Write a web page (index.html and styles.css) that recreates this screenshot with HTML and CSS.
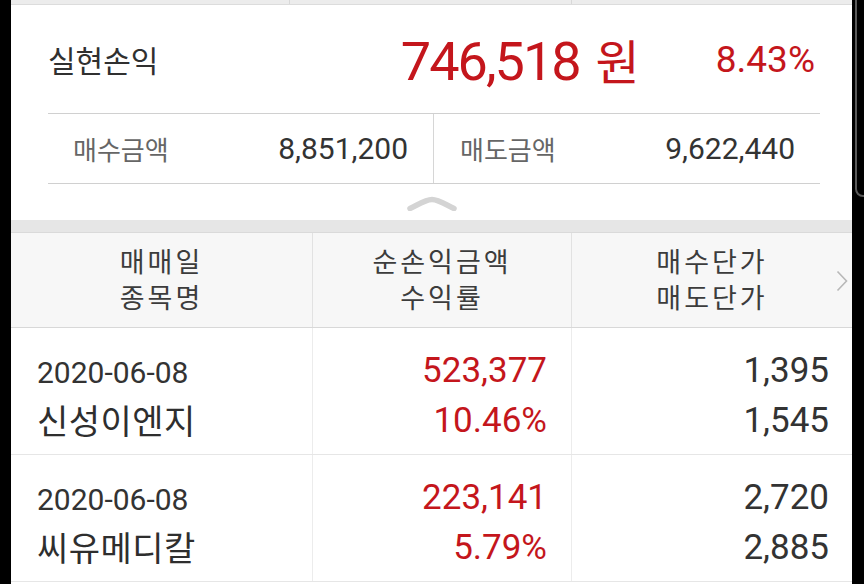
FILE: index.html
```html
<!DOCTYPE html>
<html lang="ko">
<head>
  <meta charset="UTF-8" />
  <meta name="viewport" content="width=device-width, initial-scale=1.0"/>
  <title>실현손익</title>
  <link rel="stylesheet" href="styles.css">
</head>
<body>
  <div class="screen">
    <div class="prev-table">
      <div></div><div></div><div></div>
    </div>

    <section class="summary">
      <div class="profit">
        <div class="profit-label">실현손익</div>
        <div class="profit-amount">746,518<span class="won">원</span></div>
        <div class="profit-rate">8.43%</div>
      </div>

      <div class="trade-sums">
        <div class="sum-cell">
          <span class="sum-label">매수금액</span>
          <span class="sum-value">8,851,200</span>
        </div>
        <div class="sum-cell">
          <span class="sum-label">매도금액</span>
          <span class="sum-value">9,622,440</span>
        </div>
      </div>

      <div class="collapse">
        <svg width="52" height="15" viewBox="0 0 52 15">
          <path d="M4 12.5 C14 7.5 20 3.5 26 3.5 C32 3.5 38 7.5 48 12.5" fill="none" stroke="#d4d4d4" stroke-width="5.5" stroke-linecap="round"/>
        </svg>
      </div>
    </section>

    <div class="band"></div>

    <div class="trades">
      <div class="trade-head">
        <div class="th">매매일<br>종목명</div>
        <div class="th">순손익금액<br>수익률</div>
        <div class="th th-last">
          매수단가<br>매도단가
          <svg class="more" width="12" height="22" viewBox="0 0 12 22">
            <polyline points="1.5,1.5 10.5,11 1.5,20.5" fill="none" stroke="#b8b8b8" stroke-width="1.6"/>
          </svg>
        </div>
      </div>

      <div class="trade-row">
        <div class="td td-name">
          <div class="date">2020-06-08</div>
          <div class="name">신성이엔지</div>
        </div>
        <div class="td td-profit">
          <div>523,377</div>
          <div>10.46%</div>
        </div>
        <div class="td td-price">
          <div>1,395</div>
          <div>1,545</div>
        </div>
      </div>

      <div class="trade-row">
        <div class="td td-name">
          <div class="date">2020-06-08</div>
          <div class="name">씨유메디칼</div>
        </div>
        <div class="td td-profit">
          <div>223,141</div>
          <div>5.79%</div>
        </div>
        <div class="td td-price">
          <div>2,720</div>
          <div>2,885</div>
        </div>
      </div>
    </div>
  </div>

  <div class="edge-handle"></div>
</body>
</html>
```

FILE: styles.css
```css
* {
  box-sizing: border-box;
}

html, body {
  height: 100%;
}

body {
  margin: 0;
  background: #000;
  font-family: Roboto, "Noto Sans CJK KR", sans-serif;
  color: #333;
  overflow: hidden;
  position: relative;
}

.screen {
  margin-left: 11px;
  width: 841px;
  min-height: 100%;
  background: #fff;
}

/* bottom edge of the table above */
.prev-table {
  display: grid;
  grid-template-columns: 279px 282px 1fr;
  height: 5px;
  background: #ececec;
  border-bottom: 1px solid #dcdcdc;
}

.prev-table div {
  border-right: 1px solid #d8d8d8;
}

.prev-table div:last-child {
  border-right: none;
}

.profit {
  display: flex;
  align-items: center;
  height: 108px;
  padding: 0 37px;
}

.profit-label {
  flex: 1;
  font-size: 30px;
  color: #303030;
}

.profit-amount {
  margin-top: 6px;
  font-size: 54px;
  letter-spacing: -2px;
  color: #c4161c;
  line-height: 1;
}

.won {
  font-size: 48px;
  margin-left: 16px;
  letter-spacing: 0;
}

.profit-rate {
  margin-left: 76px;
  font-size: 37px;
  color: #c4161c;
  line-height: 1;
}

.trade-sums {
  display: grid;
  grid-template-columns: 385px 1fr;
  height: 71px;
  margin: 0 32px 0 37px;
  border-top: 1px solid #d0d0d0;
  border-bottom: 1px solid #d0d0d0;
}

.sum-cell {
  display: flex;
  justify-content: space-between;
  align-items: center;
  padding: 0 25px;
}

.sum-cell + .sum-cell {
  border-left: 1px solid #d6d6d6;
  padding: 0 25px 0 26px;
}

.sum-label {
  font-size: 26px;
  color: #666;
}

.sum-value {
  font-size: 30px;
  color: #333;
}

.collapse {
  display: flex;
  justify-content: center;
  height: 36px;
  padding-top: 12px;
}

.band {
  height: 13px;
  background: #e6e6e6;
  border-bottom: 1px solid #dadada;
}

.trade-head,
.trade-row {
  display: grid;
  grid-template-columns: 302px 259px 1fr;
}

.trade-head {
  height: 95px;
  background: #f7f7f7;
  border-bottom: 1px solid #d8d8d8;
}

.th {
  position: relative;
  display: flex;
  flex-direction: column;
  justify-content: center;
  align-items: center;
  text-align: center;
  font-size: 27px;
  letter-spacing: 3px;
  line-height: 36px;
  color: #3c3c3c;
  border-right: 1px solid #e2e2e2;
  padding-top: 2px;
}

.th-last {
  border-right: none;
}

.more {
  position: absolute;
  right: 4px;
  top: 37px;
}

.trade-row {
  border-bottom: 1px solid #e6e6e6;
}

.td {
  padding: 18px 24px 8px;
  line-height: 50px;
  font-size: 35px;
  border-right: 1px solid #ececec;
}

.td-name {
  padding-left: 26px;
  padding-top: 20px;
}

.date {
  font-size: 30px;
}

.name {
  font-size: 34px;
  letter-spacing: 0.5px;
  line-height: 48px;
  color: #2e2e2e;
}

.td-profit {
  text-align: right;
  color: #c4161c;
}

.td-price {
  text-align: right;
  padding-right: 23px;
  border-right: none;
}

/* samsung edge panel handle */
.edge-handle {
  position: absolute;
  left: 855px;
  top: -12px;
  width: 20px;
  height: 209px;
  border: 2px solid #5a5a5a;
  border-radius: 8px;
}
```
